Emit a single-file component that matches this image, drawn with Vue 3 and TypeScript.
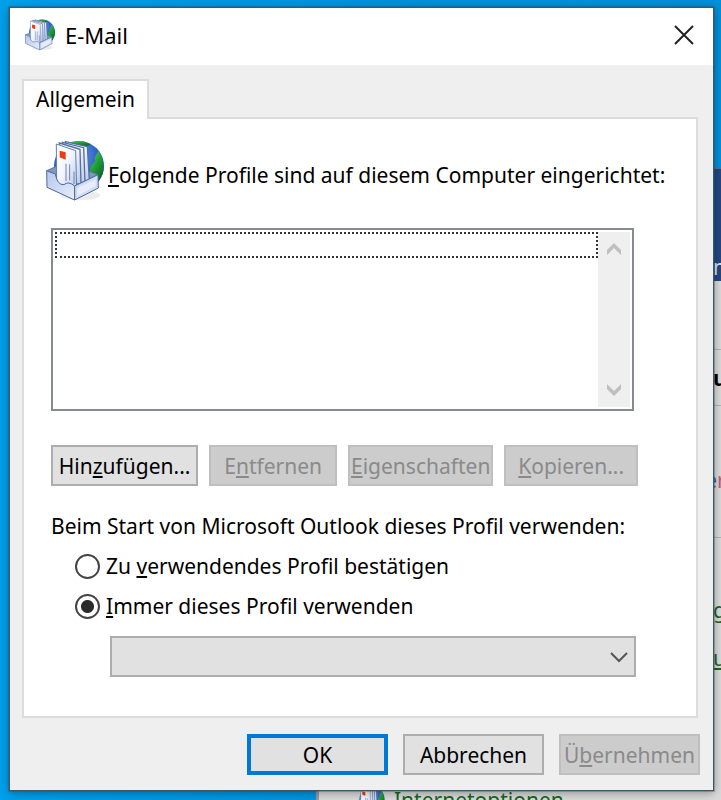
<script setup lang="ts">
import { ref } from 'vue'

const startMode = ref<'prompt' | 'always'>('always')

interface ProfileAction {
  before: string
  key: string
  after: string
  grow: number
  disabled: boolean
}

const actions: ProfileAction[] = [
  { before: 'Hin', key: 'z', after: 'ufügen...', grow: 148, disabled: false },
  { before: 'E', key: 'n', after: 'tfernen', grow: 128, disabled: true },
  { before: '', key: 'E', after: 'igenschaften', grow: 146, disabled: true },
  { before: '', key: 'K', after: 'opieren...', grow: 134, disabled: true },
]
</script>

<template>
  <div class="desktop">
    <svg width="0" height="0" class="defs" aria-hidden="true">
      <defs>
        <radialGradient id="globe" cx="0.45" cy="0.3" r="0.75">
          <stop offset="0" stop-color="#6aa2f2" />
          <stop offset="0.6" stop-color="#2c5cc4" />
          <stop offset="1" stop-color="#1c3f96" />
        </radialGradient>
        <linearGradient id="land" x1="0" y1="0" x2="0.6" y2="1">
          <stop offset="0" stop-color="#5cd257" />
          <stop offset="0.5" stop-color="#1d9c35" />
          <stop offset="1" stop-color="#0b5a22" />
        </linearGradient>
        <linearGradient id="paper" x1="0" y1="0" x2="1" y2="1">
          <stop offset="0" stop-color="#ffffff" />
          <stop offset="0.5" stop-color="#f2f5fd" />
          <stop offset="1" stop-color="#b9c7e8" />
        </linearGradient>
        <linearGradient id="tray" x1="0" y1="0" x2="1" y2="1">
          <stop offset="0" stop-color="#b4c7ec" />
          <stop offset="1" stop-color="#e9effb" />
        </linearGradient>
        <symbol id="mail" viewBox="45 30 180 186">
          <ellipse cx="150" cy="196" rx="60" ry="14" fill="#000" opacity="0.08" />
          <circle cx="147" cy="108" r="75" fill="url(#globe)" />
          <path d="M108 42 Q146 24 182 42 Q172 52 156 46 Q136 54 112 50Z" fill="url(#land)" />
          <path d="M206 62 Q190 84 196 94 Q180 106 180 122 L182 176 Q206 160 218 132 Q228 98 206 62Z" fill="url(#land)" />
          <path d="M50 122 L104 98 L204 134 L134 168Z" fill="#8195bf" stroke="#5d77aa" stroke-width="3" />
          <path d="M106 35 L172 50 L178 150 L128 164 L108 150Z" fill="url(#paper)" stroke="#53709f" stroke-width="4" />
          <path d="M97 37 L161 53 L165 156 L118 164Z" fill="url(#paper)" stroke="#53709f" stroke-width="4" />
          <path d="M88 39 L150 58 L153 162 L100 162Z" fill="url(#paper)" stroke="#53709f" stroke-width="4" />
          <path d="M79 42 L137 62 L140 174 L80 162Z" fill="url(#paper)" stroke="#6380b4" stroke-width="3" />
          <path d="M89 62 L107 67 L107 89 L89 82Z" fill="#f03912" />
          <path d="M108 101 V153 M119 103 V151 M132 125 V162" stroke="#6c84b4" stroke-width="3" />
          <path d="M50 122 L76 132 Q82 166 102 164 Q114 152 134 168 L134 210 L51 172Z" fill="url(#tray)" stroke="#4d689f" stroke-width="3" />
          <path d="M134 168 L204 134 L205 174 L134 210Z" fill="#cfdcf4" stroke="#4d689f" stroke-width="3" />
          <path d="M142 174 L197 148 L197 168 L142 198Z" fill="#e6eefc" />
        </symbol>
      </defs>
    </svg>

    <div class="backwindow" aria-hidden="true">
      <div class="banner"><span>n</span></div>
      <div class="strip"></div>
      <div class="strip bold"><span>ue</span></div>
      <div class="strip tall"><span class="brand">e<i>r</i></span></div>
      <div class="links">
        <span class="lk">g</span>
        <span class="lk">u</span>
      </div>
      <div class="item">
        <svg width="30" height="31"><use href="#mail" /></svg>
        <span>Internetoptionen</span>
      </div>
    </div>

    <main class="dialog" role="dialog" aria-labelledby="dialog-title">
      <header class="titlebar">
        <svg class="appicon" width="32" height="32" aria-hidden="true"><use href="#mail" /></svg>
        <h1 id="dialog-title">E-Mail</h1>
        <button class="close" type="button" aria-label="Schließen">
          <svg width="22" height="22" viewBox="0 0 22 22">
            <path d="M2 2 L20 20 M20 2 L2 20" stroke="#222" stroke-width="2" />
          </svg>
        </button>
      </header>

      <div class="body">
        <div class="tabs" role="tablist">
          <button id="tab-general" class="tab" type="button" role="tab" aria-selected="true" aria-controls="general">Allgemein</button>
        </div>

        <section id="general" class="panel" role="tabpanel" aria-labelledby="tab-general">
          <div class="intro">
            <svg width="60" height="62" aria-hidden="true"><use href="#mail" /></svg>
            <label id="profiles-label"><u>F</u>olgende Profile sind auf diesem Computer eingerichtet:</label>
          </div>

          <div class="listbox">
            <div class="options" role="listbox" tabindex="0" aria-labelledby="profiles-label">
              <div class="option" role="option" aria-selected="false"></div>
            </div>
            <div class="scroll">
              <button type="button" disabled aria-label="Nach oben">
                <svg width="14" height="12" viewBox="0 0 14 12"><path d="M0 7 L7 0 L14 7 V12 L7 5 L0 12Z" fill="#bfbfbf" /></svg>
              </button>
              <button type="button" disabled aria-label="Nach unten">
                <svg width="14" height="12" viewBox="0 0 14 12"><path d="M0 0 L7 7 L14 0 V5 L7 12 L0 5Z" fill="#bfbfbf" /></svg>
              </button>
            </div>
          </div>

          <div class="actions">
            <button
              v-for="action in actions"
              :key="action.after"
              class="btn"
              type="button"
              :disabled="action.disabled"
              :style="{ flexGrow: action.grow }"
            >{{ action.before }}<u>{{ action.key }}</u>{{ action.after }}</button>
          </div>

          <fieldset class="start">
            <legend>Beim Start von Microsoft Outlook dieses Profil verwenden:</legend>
            <label class="radio">
              <input v-model="startMode" type="radio" name="start" value="prompt" />
              <span>Zu <u>v</u>erwendendes Profil bestätigen</span>
            </label>
            <label class="radio">
              <input v-model="startMode" type="radio" name="start" value="always" />
              <span><u>I</u>mmer dieses Profil verwenden</span>
            </label>
            <div class="combo">
              <select aria-label="Profil"></select>
              <svg width="18" height="12" viewBox="0 0 18 12" aria-hidden="true">
                <path d="M1 2 L9 10 L17 2" fill="none" stroke="#555" stroke-width="2" />
              </svg>
            </div>
          </fieldset>
        </section>
      </div>

      <footer class="footer">
        <button class="btn primary" type="button">OK</button>
        <button class="btn" type="button">Abbrechen</button>
        <button class="btn" type="button" disabled>Ü<u>b</u>ernehmen</button>
      </footer>
    </main>
  </div>
</template>

<style>
body {
  background: #0095e0;
}
</style>

<style scoped>
* {
  box-sizing: border-box;
}

.desktop {
  position: relative;
  min-height: 100vh;
  padding: 7px 7px 8px 9px;
  overflow: hidden;
  background: linear-gradient(90deg, #00a0ec, #0091dc 60%, #0090da);
  color: #000;
  font-family: "Noto Sans", "Open Sans", sans-serif;
  font-size: 21px;
  line-height: 28px;
}

.defs {
  position: absolute;
}

.backwindow {
  position: absolute;
  inset: 168px 0 0 316px;
  display: flex;
  flex-direction: column;
  overflow: hidden;
  border-top: 1px solid #59708c;
  border-left: 3px solid #999;
  background: #dadada;
}

.banner,
.strip,
.links {
  display: flex;
  flex: none;
  align-items: center;
  justify-content: flex-end;
}

.banner span,
.strip span,
.links span {
  width: 8px;
  overflow: hidden;
}

.banner {
  height: 112px;
  align-items: flex-end;
  background: #234783;
  color: #dde5f2;
}

.strip {
  height: 69px;
  border-bottom: 1px solid #b5b5b5;
}

.strip.bold {
  height: 56px;
  font-weight: 700;
}

.strip.tall {
  height: 132px;
  padding-top: 16px;
}

.strip .brand {
  display: flex;
  justify-content: flex-end;
  width: auto;
  color: #1e6fae;
}

.brand i {
  flex: none;
  width: 4px;
  overflow: hidden;
  color: #c65a73;
  font-style: normal;
}

.links {
  flex-direction: column;
  align-items: flex-end;
  gap: 20px;
  padding-top: 58px;
  color: #17651d;
}

.lk {
  text-decoration: underline;
}

.item {
  display: flex;
  flex: none;
  align-items: flex-start;
  gap: 9px;
  padding: 114px 0 0 36px;
  color: #17651d;
}

.item svg {
  flex: none;
}

.dialog {
  position: relative;
  display: flex;
  flex-direction: column;
  border: 1px solid #3c5868;
  outline: 1px solid rgba(60, 75, 85, 0.35);
  background: #efefef;
  box-shadow: 0 2px 9px rgba(0, 0, 0, 0.35);
}

.titlebar {
  display: flex;
  align-items: center;
  gap: 9px;
  height: 57px;
  padding: 0 18px 4px 14px;
  background: #fff;
}

h1 {
  flex: 1;
  margin: 0;
  font-size: 22px;
  font-weight: 400;
}

button {
  padding: 0;
  border: 0;
  background: none;
  color: inherit;
  font: inherit;
}

.close {
  display: flex;
}

.body {
  padding: 14px 15px 0 12px;
}

.tabs {
  display: flex;
}

.tab {
  position: relative;
  height: 40px;
  margin-bottom: -2px;
  padding: 0 12px 3px;
  border: 2px solid #dcdcdc;
  border-bottom: 0;
  background: #fff;
}

.panel {
  padding: 21px 58px 39px 27px;
  border: 2px solid #dcdcdc;
  background: #fff;
}

.intro {
  display: flex;
  align-items: center;
  gap: 3px;
  margin-left: -6px;
  padding-bottom: 26px;
  white-space: nowrap;
}

.intro svg {
  flex: none;
}

.intro label {
  padding-top: 8px;
}

u {
  text-decoration-thickness: 2px;
  text-underline-offset: 2px;
  text-decoration-skip-ink: none;
}

.listbox {
  display: flex;
  height: 183px;
  margin-right: 4px;
  padding: 2px;
  border: 2px solid #868b93;
}

.options {
  flex: 1;
  outline: 0;
}

.option {
  height: 26px;
  border: 2px dotted #333;
}

.scroll {
  display: flex;
  flex-direction: column;
  justify-content: space-between;
  align-items: center;
  width: 32px;
  padding: 11px 0;
  background: #efefef;
}

.scroll button {
  display: flex;
}

.actions {
  display: flex;
  gap: 11px;
  padding-top: 34px;
}

.btn {
  flex: 1 1 0;
  height: 41px;
  border: 2px solid #adadad;
  background: #e1e1e1;
  white-space: nowrap;
}

.actions .btn {
  min-width: 0;
}

.btn:disabled {
  border-color: #bfbfbf;
  background: #ccc;
  color: #8a8a8a;
}

.start {
  margin: 0;
  padding: 26px 2px 0 0;
  border: 0;
}

.start legend {
  float: left;
  width: 100%;
  padding: 0 0 6px;
}

.radio {
  display: flex;
  clear: both;
  align-items: center;
  gap: 6px;
  height: 40px;
  margin-left: 24px;
}

.radio input {
  appearance: none;
  width: 25px;
  height: 25px;
  margin: 0;
  border: 2px solid #444;
  border-radius: 50%;
  background: #fff;
}

.radio input:checked {
  background: radial-gradient(circle, #2b2b2b 6px, #fff 7px);
}

.combo {
  display: grid;
  align-items: center;
  margin: 10px 0 0 59px;
}

.combo select,
.combo svg {
  grid-area: 1 / 1;
}

.combo select {
  appearance: none;
  width: 100%;
  height: 41px;
  border: 2px solid #adadad;
  border-radius: 0;
  background: #e1e1e1;
}

.combo svg {
  justify-self: end;
  margin-right: 8px;
  pointer-events: none;
}

.footer {
  display: flex;
  justify-content: flex-end;
  gap: 15px;
  padding: 16px 13px 15px 0;
}

.footer .btn {
  flex: 0 0 141px;
}

.btn.primary {
  border: 4px solid #0078d7;
}
</style>
